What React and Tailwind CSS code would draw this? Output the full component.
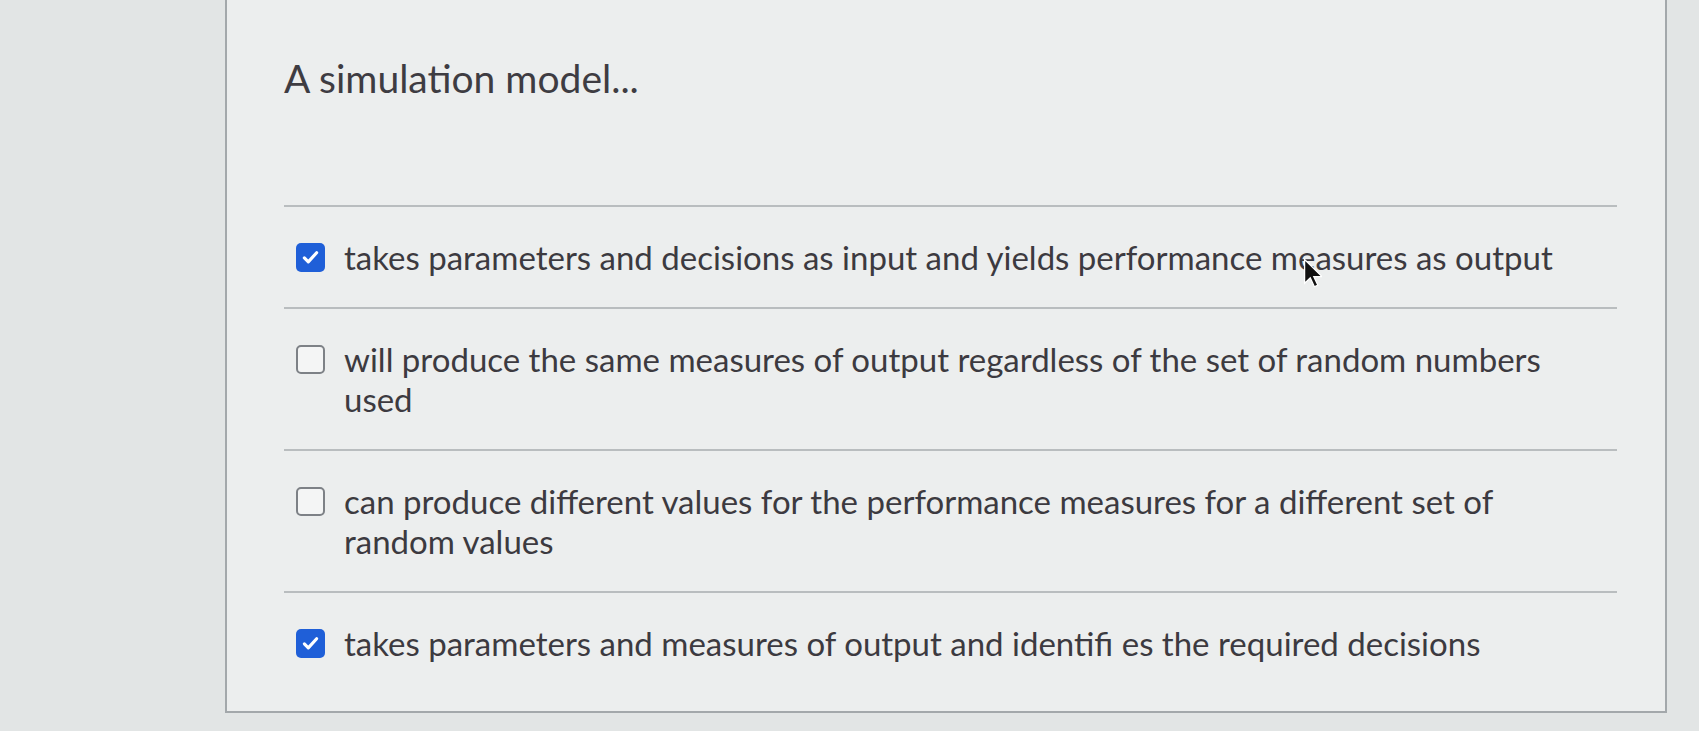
function Checkbox({ checked }) {
  if (checked) {
    return (
      <span className="mt-[6px] flex h-[29px] w-[29px] shrink-0 items-center justify-center rounded-[5px] bg-[#1f5fd8]">
        <svg viewBox="0 0 24 24" className="h-[21px] w-[21px]" fill="none" stroke="white" strokeWidth="3.6" strokeLinecap="round" strokeLinejoin="round">
          <path d="M5 12.5l4.5 4.5L19 6.5" />
        </svg>
      </span>
    );
  }
  return (
    <span className="mt-[6px] h-[29px] w-[29px] shrink-0 rounded-[5px] border-2 border-[#7d8186] bg-[#f4f5f5]" />
  );
}

function Answer({ checked, children }) {
  return (
    <li className="flex items-start gap-[19px] border-t-2 border-[#b9bdbf] py-[30px] pl-[12px]">
      <Checkbox checked={checked} />
      <span className="w-[1232px] text-[33px] leading-[40px] text-[#3c3a40]">{children}</span>
    </li>
  );
}

export default function App() {
  return (
    <div className="relative h-[731px] w-full overflow-hidden bg-[#e2e5e5] font-['Lato','Liberation_Sans',sans-serif]">
      {/* Question panel */}
      <div className="ml-[225px] h-[713px] w-[1442px] border-b-2 border-l-2 border-r-2 border-[#a3a8ab] bg-[#eceeee] px-[57px] pt-[53px]">
        <h1 className="text-[39px] leading-[50px] text-[#3e3c42]">A simulation model...</h1>

        <ul className="mt-[102px] w-[1333px]">
          <Answer checked>
            takes parameters and decisions as input and yields performance measures as output
          </Answer>
          <Answer>
            will produce the same measures of output regardless of the set of random numbers used
          </Answer>
          <Answer>
            can produce different values for the performance measures for a different set of random values
          </Answer>
          <Answer checked>
            takes parameters and measures of output and identifi es the required decisions
          </Answer>
        </ul>
      </div>

      {/* mouse pointer */}
      <svg viewBox="0 0 12 19" className="absolute left-[1303px] top-[258px] h-[30px] w-[19px]">
        <path d="M1 1v15l3.6-3.4 2.6 5.6 2.2-1-2.6-5.4H12z" fill="#111" stroke="#fff" strokeWidth="0.8" />
      </svg>
    </div>
  );
}
